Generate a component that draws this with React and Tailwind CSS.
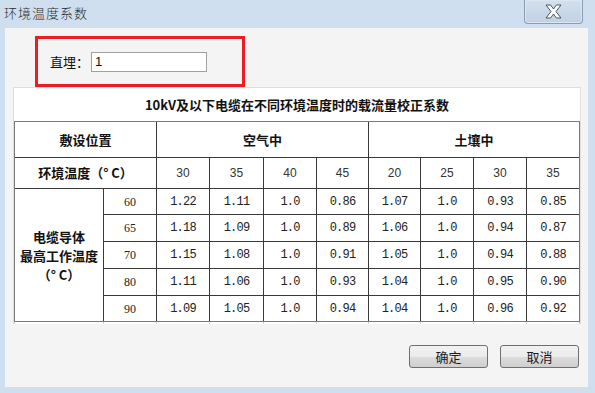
import React from "react";

const cjk = "font-['Noto_Sans_CJK_SC',sans-serif]";

const rows = [
  ["60", "1.22", "1.11", "1.0", "0.86", "1.07", "1.0", "0.93", "0.85"],
  ["65", "1.18", "1.09", "1.0", "0.89", "1.06", "1.0", "0.94", "0.87"],
  ["70", "1.15", "1.08", "1.0", "0.91", "1.05", "1.0", "0.94", "0.88"],
  ["80", "1.11", "1.06", "1.0", "0.93", "1.04", "1.0", "0.95", "0.90"],
  ["90", "1.09", "1.05", "1.0", "0.94", "1.04", "1.0", "0.96", "0.92"],
];

const temps = ["30", "35", "40", "45", "20", "25", "30", "35"];

const cols =
  "grid-cols-[88px_52px_52px_53px_52px_51px_51px_52px_52px_52px]";

function Btn({ children }) {
  return (
    <button
      className={`w-[79px] h-[23px] rounded-[3px] border border-[#707070] bg-[linear-gradient(#f2f2f2_0%,#ebebeb_50%,#dddddd_51%,#cfcfcf_100%)] text-[13px] text-[#1a1a1a] ${cjk} flex items-center justify-center leading-none`}
    >
      {children}
    </button>
  );
}

export default function App() {
  return (
    <div className="w-[595px] h-[393px] bg-[#cfdfef] overflow-hidden flex flex-col">
      {/* title bar */}
      <div className="h-[28px] flex items-start shrink-0">
        <div
          className={`h-[25px] flex items-center pl-[4px] text-[13px] font-light text-[#2a2a2a] tracking-[1px] ${cjk}`}
        >
          环境温度系数
        </div>
        <div className="ml-auto mr-[12px] w-[59px] h-[24px] rounded-b-[4px] border border-t-0 border-[#8b9cb1] bg-[linear-gradient(#d3e0ee,#c1d1e3)] shadow-[inset_0_0_0_1px_#dbe6f2] flex items-center justify-center">
          <svg width="17" height="15" viewBox="0 0 17 15">
            <path
              d="M1 1 H5.6 L8.5 5 L11.4 1 H16 L11 7.5 L16 14 H11.4 L8.5 10 L5.6 14 H1 L6 7.5 Z"
              fill="#ffffff"
              stroke="#4a5562"
              strokeWidth="1"
              strokeLinejoin="round"
            />
          </svg>
        </div>
      </div>

      {/* content */}
      <div className="ml-[5px] w-[583px] h-[359px] bg-[#f4f4f4] flex flex-col shrink-0">
        <div className="mt-[8px] ml-[30px] w-[210px] h-[51px] border-[3px] border-[#ec1c24] flex items-center pl-[12px] shrink-0">
          <span className={`text-[13px] text-[#111] ${cjk}`}>直埋：</span>
          <div className="ml-[2px] w-[116px] h-[20px] border border-[#a0a0a0] bg-white flex items-center px-[3px] text-[13px] text-[#111] font-['Liberation_Sans',sans-serif]">
            1
          </div>
        </div>

        <div className="ml-[8px] w-[568px] h-[237px] border-t border-l border-r border-[#dedede] bg-white overflow-hidden shrink-0">
          <div
            className={`h-[33px] flex items-center justify-center text-[13px] font-bold text-[#111] ${cjk}`}
          >
            10kV及以下电缆在不同环境温度时的载流量校正系数
          </div>
          <div
            className={`grid ${cols} grid-rows-[35px_30px_25px_26px_26px_26px_25px] gap-px bg-[#3a3a3a] border border-[#7a7a7a]`}
          >
            <div className={`col-span-2 bg-white flex items-center justify-center text-[13px] font-bold text-[#111] ${cjk}`}>
              敷设位置
            </div>
            <div className={`col-span-4 bg-white flex items-center justify-center text-[13px] font-bold text-[#111] ${cjk}`}>
              空气中
            </div>
            <div className={`col-span-4 bg-white flex items-center justify-center text-[13px] font-bold text-[#111] ${cjk}`}>
              土壤中
            </div>
            <div className={`col-span-2 bg-white flex items-center justify-center text-[13px] font-bold text-[#111] ${cjk}`}>
              环境温度（° C）
            </div>
            {temps.map((t, i) => (
              <div
                key={"t" + i}
                className="bg-white flex items-center justify-center text-[12px] text-[#333] font-['Liberation_Sans',sans-serif]"
              >
                {t}
              </div>
            ))}
            <div
              className={`row-span-5 bg-white flex flex-col items-center justify-center text-[13px] leading-[19px] font-bold text-[#111] ${cjk}`}
            >
              <span>电缆导体</span>
              <span>最高工作温度</span>
              <span>（° C）</span>
            </div>
            {rows.map((r, ri) =>
              r.map((v, ci) => (
                <div
                  key={ri + "-" + ci}
                  className={
                    ci === 0
                      ? "bg-white flex items-center justify-center text-[12px] text-[#222] font-['Liberation_Serif',serif]"
                      : "bg-white flex items-center justify-center text-[12px] tracking-[-0.8px] text-[#222] font-['Liberation_Mono',monospace]"
                  }
                >
                  {v}
                </div>
              ))
            )}
          </div>
          <div className={`grid ${cols} h-[3px] gap-x-px bg-[#d0d0d0] px-px`}>
            {Array.from({ length: 10 }).map((_, i) => (
              <div key={"p" + i} className="bg-white" />
            ))}
          </div>
        </div>

        <div className="mt-[21px] pr-[9px] flex justify-end gap-[12px] shrink-0">
          <Btn>确定</Btn>
          <Btn>取消</Btn>
        </div>
      </div>
    </div>
  );
}
